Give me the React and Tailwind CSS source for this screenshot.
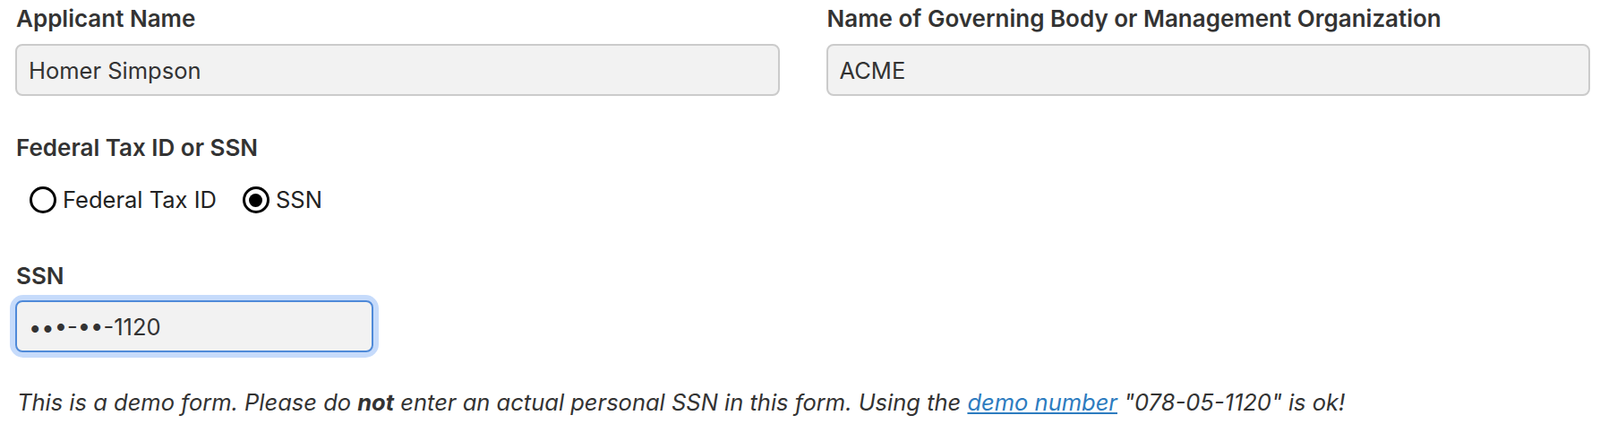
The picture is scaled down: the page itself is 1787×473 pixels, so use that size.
import React from 'react';

const labelCls = 'block text-[26px] leading-[30px] font-semibold text-[#333333]';
const inputCls = 'w-full h-[58px] rounded-[8px] border-2 border-[#cbcbcb] bg-[#f2f2f2] pl-[13px] text-[25.5px] text-[#333333] outline-none';

function Radio({ checked, label }) {
  return (
    <label className="flex items-center gap-[7px] cursor-pointer">
      <span className="w-[30px] h-[30px] rounded-full border-[3px] border-black flex items-center justify-center bg-white">
        {checked && <span className="w-[15px] h-[15px] rounded-full bg-black" />}
      </span>
      <span className="text-[25.5px] leading-[30px] text-[#222222]">{label}</span>
    </label>
  );
}

export default function App() {
  return (
    <div className="bg-white min-h-[473px] pl-[17px] pr-[11px] pt-[6px] font-['Inter','Liberation_Sans',sans-serif]">
      <div className="grid grid-cols-2 gap-x-[52px]">
        <div>
          <label className="pl-[1px] mb-[13px] block"><span className={labelCls}>Applicant Name</span></label>
          <input className={inputCls} defaultValue="Homer Simpson" readOnly />
        </div>
        <div>
          <label className="pl-[1px] mb-[13px] block"><span className={labelCls}>Name of Governing Body or Management Organization</span></label>
          <input className={inputCls} defaultValue="ACME" readOnly />
        </div>
      </div>

      <div className="mt-[43px]">
        <span className={`${labelCls} pl-[1px]`}>Federal Tax ID or SSN</span>
        <div className="flex items-center gap-[29px] pl-[16px] mt-[28px]">
          <Radio label="Federal Tax ID" />
          <Radio checked label="SSN" />
        </div>
      </div>

      <div className="mt-[55px]">
        <span className={`${labelCls} pl-[1px]`}>SSN</span>
        <div className="mt-[12px] w-[400px] rounded-[9px] ring-[6px] ring-[#c6dbfb]">
          <input
            className="w-full h-[58px] rounded-[8px] border-2 border-[#4f8ad9] bg-[#f2f2f2] pl-[13px] text-[25.5px] text-[#333333] outline-none"
            defaultValue="•••-••-1120"
            readOnly
          />
        </div>
      </div>

      <p className="mt-[37px] pl-[2px] text-[25.5px] italic text-[#333333]">
        This is a demo form. Please do <strong className="font-bold">not</strong> enter an actual personal SSN in this form. Using the{' '}
        <a href="#" className="text-[#2d7cc0] underline">demo number</a> "078-05-1120" is ok!
      </p>
    </div>
  );
}
